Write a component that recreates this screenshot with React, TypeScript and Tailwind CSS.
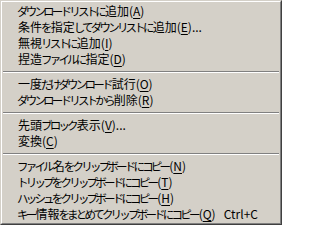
import React from "react";

type Item = { pre: string; key: string; post?: string; shortcut?: string } | "sep";

const items: Item[] = [
  { pre: "ダウンロードリストに追加(", key: "A", post: ")" },
  { pre: "条件を指定してダウンリストに追加(", key: "E", post: ")..." },
  { pre: "無視リストに追加(", key: "I", post: ")" },
  { pre: "捏造ファイルに指定(", key: "D", post: ")" },
  "sep",
  { pre: "一度だけダウンロード試行(", key: "O", post: ")" },
  { pre: "ダウンロードリストから削除(", key: "R", post: ")" },
  "sep",
  { pre: "先頭ブロック表示(", key: "V", post: ")..." },
  { pre: "変換(", key: "C", post: ")" },
  "sep",
  { pre: "ファイル名をクリップボードにコピー(", key: "N", post: ")" },
  { pre: "トリップをクリップボードにコピー(", key: "T", post: ")" },
  { pre: "ハッシュをクリップボードにコピー(", key: "H", post: ")" },
  { pre: "キー情報をまとめてクリップボードにコピー(", key: "Q", post: ")", shortcut: "Ctrl+C" },
];

function Kana({ text }: { text: string }) {
  const parts = text.split(/([\u3040-\u30ff]+)/);
  return (
    <>
      {parts.map((p, i) =>
        /^[\u3040-\u30ff]+$/.test(p) ? (
          <span key={i} className="text-[11.5px] tracking-[-2.8px] ml-[-1px] mr-[1px]">
            {p}
          </span>
        ) : (
          <span key={i}>{p}</span>
        )
      )}
    </>
  );
}

export default function App() {
  return (
    <div className="w-[282px] h-[225px] bg-[#d4d0c8] border border-t-[#d4d0c8] border-l-[#d4d0c8] border-r-[#404040] border-b-[#404040] text-black">
      <div className="h-full border border-t-white border-l-white border-r-[#808080] border-b-[#808080] p-[1px] flex flex-col">
        {items.map((it, i) =>
          it === "sep" ? (
            <div key={i} className="h-[9px] flex flex-col justify-center">
              <div className="h-[1px] bg-[#808080]" />
              <div className="h-[1px] bg-white" />
            </div>
          ) : (
            <div
              key={i}
              className="h-[16px] flex items-center justify-between pl-[15px] pr-[21px] text-[12px] leading-[16px] whitespace-nowrap font-['Noto_Sans_CJK_JP','Noto_Sans',sans-serif]"
            >
              <span>
                <Kana text={it.pre} />
                <span className="underline underline-offset-[2px]">{it.key}</span>
                {it.post}
              </span>
              {it.shortcut && <span>{it.shortcut}</span>}
            </div>
          )
        )}
      </div>
    </div>
  );
}
